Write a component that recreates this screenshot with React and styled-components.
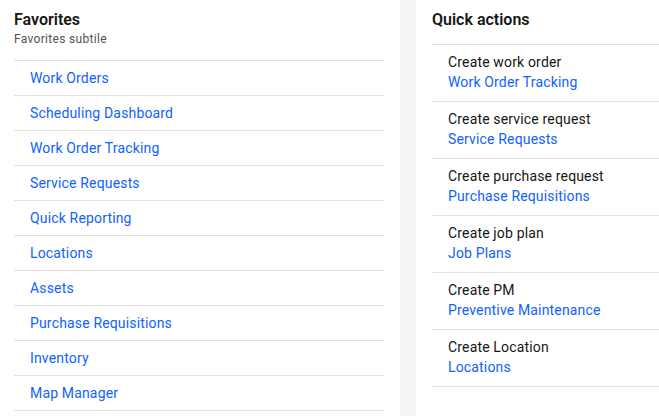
import React from "react"
import styled, { createGlobalStyle } from "styled-components"

const Global = createGlobalStyle`
  html, body {
    margin: 0;
    padding: 0;
    background: #f4f4f4;
  }
  body {
    font-family: Roboto, "Liberation Sans", sans-serif;
    color: #161616;
  }
`

const Page = styled.div`
  display: flex;
  gap: 16px;
  height: 416px;
  background: #f4f4f4;
  overflow: hidden;
`

const Panel = styled.section`
  background: #ffffff;
  width: ${(p) => p.$width}px;
  flex-shrink: 0;
  padding: 0 ${(p) => p.$padRight}px 0 ${(p) => p.$padLeft}px;
  box-sizing: border-box;
`

const Header = styled.header`
  padding-top: 9px;
  height: ${(p) => p.$height}px;
  box-sizing: border-box;
  border-bottom: 1px solid #e0e0e0;
`

const Title = styled.h2`
  margin: 0;
  font-size: 16px;
  font-weight: 600;
  line-height: 22px;
  color: #161616;
`

const Subtitle = styled.div`
  font-size: 12px;
  line-height: 16px;
  letter-spacing: 0.32px;
  color: #525252;
`

const List = styled.ul`
  list-style: none;
  margin: 0;
  padding: 0;
`

const FavRow = styled.li`
  height: 35px;
  box-sizing: border-box;
  border-bottom: 1px solid #e0e0e0;
  display: flex;
  align-items: center;
  padding-left: 16px;
`

const Link = styled.a`
  color: #0f62fe;
  font-size: 14px;
  line-height: 20px;
  letter-spacing: 0.16px;
  text-decoration: none;
`

const ActionRow = styled.li`
  height: 57px;
  box-sizing: border-box;
  border-bottom: 1px solid #e0e0e0;
  padding: 7px 0 0 16px;
  display: flex;
  flex-direction: column;
`

const ActionLabel = styled.span`
  font-size: 14px;
  line-height: 20px;
  letter-spacing: 0.16px;
  color: #161616;
`

const favorites = [
  "Work Orders",
  "Scheduling Dashboard",
  "Work Order Tracking",
  "Service Requests",
  "Quick Reporting",
  "Locations",
  "Assets",
  "Purchase Requisitions",
  "Inventory",
  "Map Manager",
]

const actions = [
  ["Create work order", "Work Order Tracking"],
  ["Create service request", "Service Requests"],
  ["Create purchase request", "Purchase Requisitions"],
  ["Create job plan", "Job Plans"],
  ["Create PM", "Preventive Maintenance"],
  ["Create Location", "Locations"],
]

const App = () => {
  return (
    <>
      <Global />
      <Page>
        <Panel $width={400} $padLeft={14} $padRight={16}>
          <Header $height={61}>
            <Title>Favorites</Title>
            <Subtitle>Favorites subtile</Subtitle>
          </Header>
          <List>
            {favorites.map((f) => (
              <FavRow key={f}>
                <Link href="#">{f}</Link>
              </FavRow>
            ))}
          </List>
        </Panel>
        <Panel $width={243} $padLeft={16} $padRight={0}>
          <Header $height={45}>
            <Title>Quick actions</Title>
          </Header>
          <List>
            {actions.map(([label, link]) => (
              <ActionRow key={label}>
                <ActionLabel>{label}</ActionLabel>
                <Link href="#">{link}</Link>
              </ActionRow>
            ))}
          </List>
        </Panel>
      </Page>
    </>
  )
}

export default App
